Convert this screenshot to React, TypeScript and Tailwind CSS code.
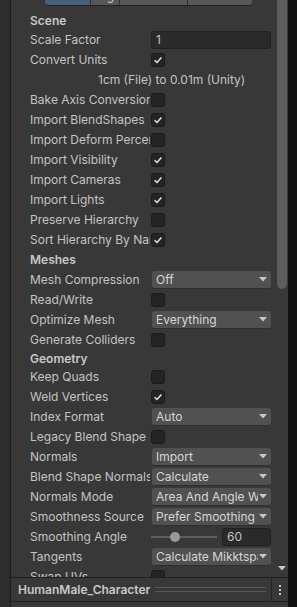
import React from "react";

type Row =
  | { kind: "header"; label: string; h?: string }
  | { kind: "check"; label: string; checked?: boolean }
  | { kind: "select"; label: string; value: string }
  | { kind: "input"; label: string; value: string }
  | { kind: "note"; text: string }
  | { kind: "slider"; label: string; value: string };

const rows: Row[] = [
  { kind: "header", label: "Scene", h: "h-[19px]" },
  { kind: "input", label: "Scale Factor", value: "1" },
  { kind: "check", label: "Convert Units", checked: true },
  { kind: "note", text: "1cm (File) to 0.01m (Unity)" },
  { kind: "check", label: "Bake Axis Conversion" },
  { kind: "check", label: "Import BlendShapes", checked: true },
  { kind: "check", label: "Import Deform Percent" },
  { kind: "check", label: "Import Visibility", checked: true },
  { kind: "check", label: "Import Cameras", checked: true },
  { kind: "check", label: "Import Lights", checked: true },
  { kind: "check", label: "Preserve Hierarchy" },
  { kind: "check", label: "Sort Hierarchy By Name", checked: true },
  { kind: "header", label: "Meshes", h: "h-[20px]" },
  { kind: "select", label: "Mesh Compression", value: "Off" },
  { kind: "check", label: "Read/Write" },
  { kind: "select", label: "Optimize Mesh", value: "Everything" },
  { kind: "check", label: "Generate Colliders" },
  { kind: "header", label: "Geometry", h: "h-[17px]" },
  { kind: "check", label: "Keep Quads" },
  { kind: "check", label: "Weld Vertices", checked: true },
  { kind: "select", label: "Index Format", value: "Auto" },
  { kind: "check", label: "Legacy Blend Shape Normals" },
  { kind: "select", label: "Normals", value: "Import" },
  { kind: "select", label: "Blend Shape Normals", value: "Calculate" },
  { kind: "select", label: "Normals Mode", value: "Area And Angle Weighted" },
  { kind: "select", label: "Smoothness Source", value: "Prefer Smoothing Groups" },
  { kind: "slider", label: "Smoothing Angle", value: "60" },
  { kind: "select", label: "Tangents", value: "Calculate Mikktspace" },
  { kind: "check", label: "Swap UVs" },
];

const Check = ({ on }: { on?: boolean }) => (
  <div className="w-[14px] h-[14px] rounded-[3px] bg-[#242424] border border-[#1a1a1a] flex items-center justify-center">
    {on && (
      <svg width="10" height="10" viewBox="0 0 10 10">
        <path d="M1.6 5.2 L4 7.5 L8.4 2.4" fill="none" stroke="#e4e4e4" strokeWidth="1.5" />
      </svg>
    )}
  </div>
);

const Arrow = () => (
  <svg width="8" height="5" viewBox="0 0 8 5" className="shrink-0">
    <path d="M0 0 H8 L4 4.5 Z" fill="#c8c8c8" />
  </svg>
);

const Label = ({ text }: { text: string }) => (
  <div className="w-[121px] shrink-0 pr-[1px]">
    <div className="overflow-hidden whitespace-nowrap">{text}</div>
  </div>
);

const RowView = ({ row }: { row: Row }) => {
  if (row.kind === "header")
    return (
      <div className={`${row.h} flex items-center font-semibold text-[#c8c8c8]`}>{row.label}</div>
    );
  if (row.kind === "note")
    return <div className="h-[20px] flex items-center pl-[68px]">{row.text}</div>;
  return (
    <div className="h-[20px] flex items-center">
      <Label text={row.label} />
      {row.kind === "check" && <Check on={row.checked} />}
      {row.kind === "input" && (
        <div className="w-[120px] h-[18px] rounded-[3px] bg-[#2a2a2a] border border-[#202020] flex items-center pl-[4px]">
          {row.value}
        </div>
      )}
      {row.kind === "select" && (
        <div className="w-[119px] ml-[1px] h-[18px] rounded-[3px] bg-[#515151] border-b border-[#2e2e2e] flex items-center pl-[4px] pr-[4px] gap-[1px]">
          <div className="flex-1 overflow-hidden whitespace-nowrap text-[#d6d6d6]">{row.value}</div>
          <Arrow />
        </div>
      )}
      {row.kind === "slider" && (
        <div className="w-[120px] flex items-center">
          <div className="relative w-[66px] h-[10px] flex items-center">
            <div className="w-full h-[2px] bg-[#5e5e5e]" />
            <div className="absolute left-[19px] top-0 w-[10px] h-[10px] rounded-full bg-[#999999]" />
          </div>
          <div className="ml-[5px] w-[49px] h-[18px] rounded-[3px] bg-[#2a2a2a] border border-[#202020] flex items-center pl-[4px]">
            {row.value}
          </div>
        </div>
      )}
    </div>
  );
};

export default function App() {
  return (
    <div
      className="w-[297px] h-[607px] flex overflow-hidden bg-[#383838] text-[12px] text-[#c4c4c4]"
      style={{ fontFamily: "Inter, 'Noto Sans', sans-serif" }}
    >
      <div className="w-[10px] shrink-0 bg-[#2d2d2d] border-r border-[#1e1e1e] box-content" />
      <div className="flex-1 flex flex-col min-w-0">
        <div className="flex-1 flex min-h-0 overflow-hidden">
          <div className="flex-1 flex flex-col min-w-0">
            <div className="ml-[34px] w-[207px] h-[21px] mt-[-15px] flex shrink-0 rounded-b-[4px] overflow-hidden border-b border-[#222222] text-[#c8c8c8]">
              <div className="w-[45px] bg-[#46607c]" />
              <div className="w-[29px] bg-[#585858] border-l border-[#303030] flex items-center justify-center leading-none pt-[2px]">Rig</div>
              <div className="w-[68px] bg-[#585858] border-l border-[#303030]" />
              <div className="flex-1 bg-[#585858] border-l border-[#303030]" />
            </div>
            <div className="pl-[19px] pt-[5px] flex flex-col">
              {rows.map((r, i) => (
                <RowView key={i} row={r} />
              ))}
            </div>
          </div>
          <div className="w-[12px] shrink-0 flex flex-col items-center pr-[1px]">
            <div className="w-[10px] h-[289px] bg-[#5d5d5d] rounded-b-[5px]" />
            <div className="flex-1" />
            <svg width="8" height="5" viewBox="0 0 8 5" className="mb-[6px]">
              <path d="M0 0 H8 L4 4.5 Z" fill="#c8c8c8" />
            </svg>
          </div>
        </div>
        <div className="h-[23px] shrink-0 border-t border-b border-[#1f1f1f] box-content flex items-center bg-[#383838]">
          <div className="pl-[7px] text-[12px] font-semibold text-[#c8c8c8] whitespace-nowrap">HumanMale_Character</div>
          <div className="flex-1 mx-[5px] flex flex-col gap-[3px]">
            <div className="h-px bg-[#595959]" />
            <div className="h-px bg-[#595959]" />
          </div>
          <div className="w-px self-stretch bg-[#222222]" />
          <div className="w-[16px] flex flex-col items-center gap-[2px]">
            <div className="w-[2px] h-[2px] bg-[#c8c8c8]" />
            <div className="w-[2px] h-[2px] bg-[#c8c8c8]" />
            <div className="w-[2px] h-[2px] bg-[#c8c8c8]" />
          </div>
        </div>
        <div className="h-[5px] shrink-0" />
      </div>
      <div className="w-[9px] shrink-0 bg-[#121212]" />
    </div>
  );
}
